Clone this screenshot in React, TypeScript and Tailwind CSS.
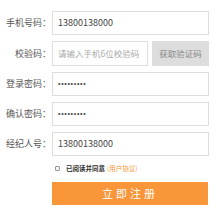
export default function App() {
  const rows = [
    { label: '登录密码', value: '•••••••••', pwd: true },
    { label: '确认密码', value: '•••••••••', pwd: true },
    { label: '经纪人号', value: '13800138000', pwd: false },
  ];

  return (
    <div
      className="w-[220px] h-[214px] bg-white pt-[11px] text-[9px] text-[#555] overflow-hidden"
      style={{ fontFamily: '"Noto Sans CJK SC", "Noto Sans", sans-serif' }}
    >
      <div className="flex flex-col gap-[6px]">
        <div className="flex items-center">
          <label className="w-[52px] shrink-0 text-right pr-[1px] whitespace-nowrap">手机号码：</label>
          <div className="w-[157px] h-[24px] border border-[#ddd] flex items-center px-[5px] text-[#444]">
            13800138000
          </div>
        </div>

        <div className="flex items-center">
          <label className="w-[52px] shrink-0 text-right pr-[1px] whitespace-nowrap">校验码：</label>
          <div className="w-[96px] h-[25px] border border-[#ddd] flex items-center px-[5px] text-[8.5px] text-[#aaa] whitespace-nowrap overflow-hidden">
            请输入手机6位校验码
          </div>
          <button className="ml-[4px] w-[57px] h-[25px] bg-[#ddd] text-[#888] text-[8.5px] whitespace-nowrap">获取验证码</button>
        </div>

        {rows.map((r) => (
          <div key={r.label} className="flex items-center">
            <label className="w-[52px] shrink-0 text-right pr-[1px] whitespace-nowrap">{r.label}：</label>
            <div
              className={`w-[157px] h-[24px] border border-[#ddd] flex items-center px-[5px] text-[#444] ${
                r.pwd ? "text-[7px] tracking-[0.7px] font-['Liberation_Sans',sans-serif] text-[#444]" : ''
              }`}
            >
              {r.value}
            </div>
          </div>
        ))}
      </div>

      <div className="flex items-center ml-[55px] mt-[9px] text-[6.5px] leading-none">
        <span className="w-[5px] h-[5px] border border-[#999] rounded-[1px] bg-[#f5f5f5]" />
        <span className="ml-[6px] font-bold text-[#333]">已阅读并同意</span>
        <span className="ml-[2px] text-[#f7962f]">(用户协议)</span>
      </div>

      <button className="mt-[10px] ml-[52px] w-[156px] h-[23px] bg-[#f9963a] text-white text-[11px] tracking-[3px] flex items-center justify-center whitespace-nowrap">
        立即注册
      </button>
    </div>
  );
}
